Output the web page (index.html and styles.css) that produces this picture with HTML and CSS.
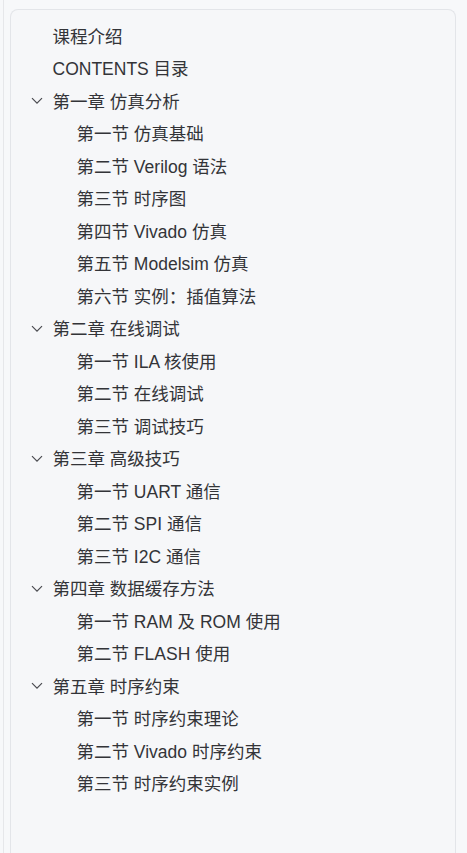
FILE: index.html
```html
<!DOCTYPE html>
<html lang="zh-CN">
<head>
<meta charset="utf-8">
<link rel="stylesheet" href="styles.css">
</head>
<body>
<div class="frame">
  <nav class="panel">
    <ul class="toc">
      <li class="row top"><span class="label">课程介绍</span></li>
      <li class="row top"><span class="label">CONTENTS 目录</span></li>
      <li class="chapter">
        <div class="row head"><svg class="chev" viewBox="0 0 12 8"><path d="M1 1.2 L6 6.2 L11 1.2"/></svg><span class="label">第一章 仿真分析</span></div>
        <ul class="sections">
          <li class="row sec">第一节 仿真基础</li>
          <li class="row sec">第二节 Verilog 语法</li>
          <li class="row sec">第三节 时序图</li>
          <li class="row sec">第四节 Vivado 仿真</li>
          <li class="row sec">第五节 Modelsim 仿真</li>
          <li class="row sec">第六节 实例：插值算法</li>
        </ul>
      </li>
      <li class="chapter">
        <div class="row head"><svg class="chev" viewBox="0 0 12 8"><path d="M1 1.2 L6 6.2 L11 1.2"/></svg><span class="label">第二章 在线调试</span></div>
        <ul class="sections">
          <li class="row sec">第一节 ILA 核使用</li>
          <li class="row sec">第二节 在线调试</li>
          <li class="row sec">第三节 调试技巧</li>
        </ul>
      </li>
      <li class="chapter">
        <div class="row head"><svg class="chev" viewBox="0 0 12 8"><path d="M1 1.2 L6 6.2 L11 1.2"/></svg><span class="label">第三章 高级技巧</span></div>
        <ul class="sections">
          <li class="row sec">第一节 UART 通信</li>
          <li class="row sec">第二节 SPI 通信</li>
          <li class="row sec">第三节 I2C 通信</li>
        </ul>
      </li>
      <li class="chapter">
        <div class="row head"><svg class="chev" viewBox="0 0 12 8"><path d="M1 1.2 L6 6.2 L11 1.2"/></svg><span class="label">第四章 数据缓存方法</span></div>
        <ul class="sections">
          <li class="row sec">第一节 RAM 及 ROM 使用</li>
          <li class="row sec">第二节 FLASH 使用</li>
        </ul>
      </li>
      <li class="chapter">
        <div class="row head"><svg class="chev" viewBox="0 0 12 8"><path d="M1 1.2 L6 6.2 L11 1.2"/></svg><span class="label">第五章 时序约束</span></div>
        <ul class="sections">
          <li class="row sec">第一节 时序约束理论</li>
          <li class="row sec">第二节 Vivado 时序约束</li>
          <li class="row sec">第三节 时序约束实例</li>
        </ul>
      </li>
    </ul>
  </nav>
</div>
</body>
</html>
```
FILE: styles.css
```css
html, body {
  margin: 0;
  padding: 0;
  height: 100%;
  overflow: hidden;
  background: #f7f8fa;
}
.frame {
  margin-left: 3px;
  border-left: 1px solid #e6e7ea;
  height: 100%;
  padding: 9px 0 0 6px;
  box-sizing: border-box;
}
.panel {
  width: 446px;
  height: 100%;
  box-sizing: border-box;
  border: 1.5px solid #e3e5e9;
  border-bottom: none;
  border-radius: 8px 8px 0 0;
  background: #f6f7f9;
  padding-top: 9px;
  font-family: "Liberation Sans", "Noto Sans CJK SC", sans-serif;
  font-size: 17.5px;
  color: #333438;
}
.toc, .sections {
  list-style: none;
  margin: 0;
  padding: 0;
}
.row {
  height: 32.5px;
  display: flex;
  align-items: center;
  white-space: nowrap;
}
.top {
  padding-left: 41.5px;
}
.head {
  padding-left: 20px;
}
.chev {
  width: 12px;
  height: 8px;
  margin-right: 9.5px;
  margin-top: 2px;
  fill: none;
  stroke: #4a4b50;
  stroke-width: 1.2;
}
.sec {
  padding-left: 65.5px;
}
```
